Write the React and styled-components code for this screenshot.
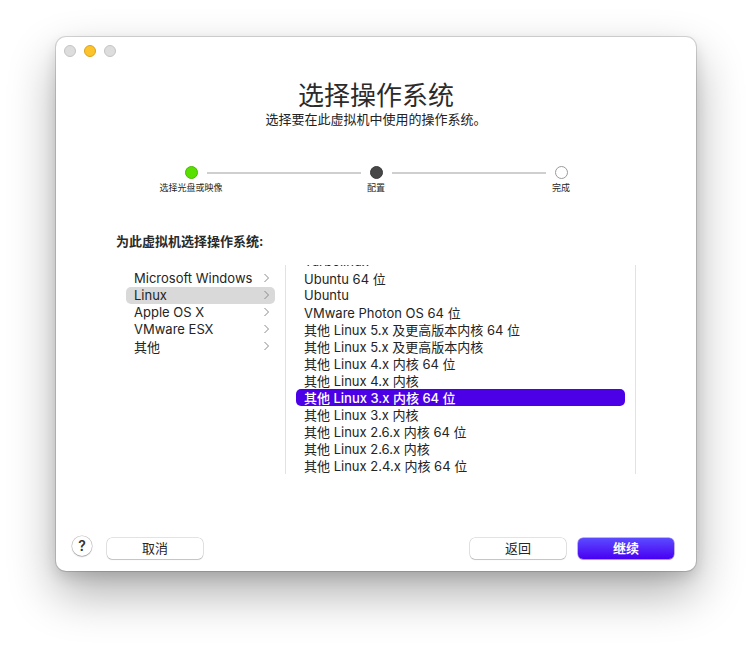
import React from 'react';
import styled, { createGlobalStyle } from 'styled-components';

const GlobalStyle = createGlobalStyle`
	html, body {
		margin: 0;
		padding: 0;
		background: #ffffff;
	}
	body {
		font-family: "Inter", "Noto Sans CJK SC", sans-serif;
		color: #242424;
		-webkit-font-smoothing: antialiased;
	}
`;

const Page = styled.div`
	width: 752px;
	height: 645px;
	padding: 37px 0 0 56px;
	box-sizing: border-box;
`;

const Window = styled.div`
	width: 640px;
	height: 534px;
	box-sizing: border-box;
	background: #ffffff;
	border-radius: 10px;
	box-shadow: 0 0 0 1px rgba(0, 0, 0, 0.14), 0 22px 48px rgba(0, 0, 0, 0.32),
		0 6px 14px rgba(0, 0, 0, 0.12);
	display: flex;
	flex-direction: column;
	padding-bottom: 12px;
`;

const TitleBar = styled.div`
	height: 28px;
	display: flex;
	align-items: center;
	gap: 8px;
	padding-left: 8px;
`;

const Light = styled.span`
	width: 12px;
	height: 12px;
	border-radius: 50%;
	box-sizing: border-box;
	background: ${(p) => (p.$active ? '#fdc32c' : '#dddddd')};
	border: 0.5px solid ${(p) => (p.$active ? '#dca21b' : '#c4c4c4')};
`;

const Title = styled.h1`
	margin: 16px 0 0;
	font-size: 26px;
	line-height: 30px;
	font-weight: 400;
	color: #2b2b2b;
	text-align: center;
`;

const Subtitle = styled.p`
	margin: 0;
	font-size: 13px;
	line-height: 16px;
	color: #222;
	text-align: center;
`;

const Stepper = styled.div`
	display: grid;
	grid-template-columns: 13px 1fr 13px 1fr 13px;
	width: 383px;
	margin: 39px auto 0;
`;

const Step = styled.div`
	width: 13px;
	display: flex;
	flex-direction: column;
	align-items: center;
`;

const Dot = styled.span`
	width: 13px;
	height: 13px;
	box-sizing: border-box;
	border-radius: 50%;
	background: ${(p) => (p.$state === 'done' ? '#5ae000' : p.$state === 'current' ? '#474747' : '#ffffff')};
	border: 1px solid
		${(p) => (p.$state === 'done' ? '#48b800' : p.$state === 'current' ? '#3a3a3a' : '#9a9a9a')};
`;

const StepLabel = styled.span`
	margin-top: 3px;
	font-size: 9px;
	line-height: 12px;
	white-space: nowrap;
	color: #262626;
`;

const StepLine = styled.span`
	height: 2px;
	margin: 5.5px 9px 0;
	background: #cfcfcf;
`;

const SectionLabel = styled.div`
	margin: 39px 60px 0;
	font-size: 13px;
	line-height: 16px;
	font-weight: 700;
	color: #2a2a2a;
`;

const Panel = styled.div`
	margin: 16px 60px 0;
	height: 209px;
	display: grid;
	grid-template-columns: 170px 1fr;
	border-right: 1px solid #e2e2e2;
`;

const Column = styled.div`
	overflow: hidden;
	border-right: ${(p) => (p.$divider ? '1px solid #e2e2e2' : 'none')};
`;

const List = styled.ul`
	list-style: none;
	margin: ${(p) => p.$offset}px 10px 0;
	padding: 0;
`;

const Row = styled.li`
	height: 17px;
	display: flex;
	align-items: center;
	justify-content: space-between;
	padding: 0 5px 0 8px;
	border-radius: 5px;
	font-size: 13px;
	white-space: nowrap;
	background: ${(p) => (p.$selected === 'gray' ? '#d9d9d9' : p.$selected === 'blue' ? '#4c00e6' : 'transparent')};
	color: ${(p) => (p.$selected === 'blue' ? '#ffffff' : '#242424')};
	font-weight: ${(p) => (p.$selected === 'blue' ? 500 : 400)};
`;

const Chevron = () => (
	<svg width="7" height="10" viewBox="0 0 7 10">
		<polyline points="1.5,1 5.5,5 1.5,9" fill="none" stroke="#8a8a8a" strokeWidth="1" />
	</svg>
);

const Footer = styled.div`
	margin-top: auto;
	display: flex;
	align-items: center;
	padding: 0 22px 0 16px;
`;

const HelpButton = styled.button`
	width: 20px;
	height: 20px;
	margin-top: -6px;
	padding: 0;
	border-radius: 50%;
	border: none;
	background: #ffffff;
	box-shadow: 0 0 0 0.5px rgba(0, 0, 0, 0.25), 0 1px 1.5px rgba(0, 0, 0, 0.2);
	font-family: inherit;
	font-size: 14px;
	font-weight: 600;
	color: #333;
	line-height: 20px;
`;

const Button = styled.button`
	width: 96px;
	height: 21px;
	padding: 0;
	border: none;
	border-radius: 5px;
	font-family: inherit;
	font-size: 13px;
	line-height: 21px;
	margin-left: ${(p) => p.$gap || 0}px;
	background: ${(p) => (p.$primary ? 'linear-gradient(#5b4bff, #4800f2)' : '#ffffff')};
	color: ${(p) => (p.$primary ? '#ffffff' : '#262626')};
	font-weight: ${(p) => (p.$primary ? 600 : 400)};
	box-shadow: ${(p) =>
		p.$primary
			? '0 0 0 0.5px rgba(60, 0, 200, 0.6), 0 1px 1px rgba(0, 0, 0, 0.15)'
			: '0 0 0 0.5px rgba(0, 0, 0, 0.22), 0 1px 1px rgba(0, 0, 0, 0.14)'};
`;

const Spacer = styled.div`
	flex: 1;
`;

const families = ['Microsoft Windows', 'Linux', 'Apple OS X', 'VMware ESX', '其他'];

const versions = [
	'Turbolinux',
	'Ubuntu 64 位',
	'Ubuntu',
	'VMware Photon OS 64 位',
	'其他 Linux 5.x 及更高版本内核 64 位',
	'其他 Linux 5.x 及更高版本内核',
	'其他 Linux 4.x 内核 64 位',
	'其他 Linux 4.x 内核',
	'其他 Linux 3.x 内核 64 位',
	'其他 Linux 3.x 内核',
	'其他 Linux 2.6.x 内核 64 位',
	'其他 Linux 2.6.x 内核',
	'其他 Linux 2.4.x 内核 64 位',
];

const steps = [
	{ label: '选择光盘或映像', state: 'done' },
	{ label: '配置', state: 'current' },
	{ label: '完成', state: 'todo' },
];

export default function App() {
	return (
		<Page>
			<GlobalStyle />
			<Window>
				<TitleBar>
					<Light />
					<Light $active />
					<Light />
				</TitleBar>
				<Title>选择操作系统</Title>
				<Subtitle>选择要在此虚拟机中使用的操作系统。</Subtitle>

				<Stepper>
					{steps.map((s, i) => (
						<React.Fragment key={s.label}>
							{i > 0 && <StepLine />}
							<Step>
								<Dot $state={s.state} />
								<StepLabel>{s.label}</StepLabel>
							</Step>
						</React.Fragment>
					))}
				</Stepper>

				<SectionLabel>为此虚拟机选择操作系统:</SectionLabel>
				<Panel>
					<Column $divider>
						<List $offset={4.5}>
							{families.map((f) => (
								<Row key={f} $selected={f === 'Linux' ? 'gray' : undefined}>
									{f}
									<Chevron />
								</Row>
							))}
						</List>
					</Column>
					<Column>
						<List $offset={-12.5}>
							{versions.map((v, i) => (
								<Row key={v} $selected={i === 8 ? 'blue' : undefined}>
									{v}
								</Row>
							))}
						</List>
					</Column>
				</Panel>

				<Footer>
					<HelpButton>?</HelpButton>
					<Button $gap={15}>取消</Button>
					<Spacer />
					<Button>返回</Button>
					<Button $primary $gap={12}>继续</Button>
				</Footer>
			</Window>
		</Page>
	);
}
